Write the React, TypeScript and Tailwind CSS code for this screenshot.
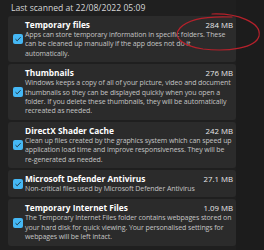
const items = [
  {
    title: "Temporary files",
    size: "284 MB",
    lines: [
      "Apps can store temporary information in specific folders. These",
      "can be cleaned up manually if the app does not do it",
      "automatically.",
    ],
  },
  {
    title: "Thumbnails",
    size: "276 MB",
    lines: [
      "Windows keeps a copy of all of your picture, video and document",
      "thumbnails so they can be displayed quickly when you open a",
      "folder. If you delete these thumbnails, they will be automatically",
      "recreated as needed.",
    ],
  },
  {
    title: "DirectX Shader Cache",
    size: "242 MB",
    lines: [
      "Clean up files created by the graphics system which can speed up",
      "application load time and improve responsiveness. They will be",
      "re-generated as needed.",
    ],
  },
  {
    title: "Microsoft Defender Antivirus",
    size: "27.1 MB",
    lines: ["Non-critical files used by Microsoft Defender Antivirus"],
  },
  {
    title: "Temporary Internet Files",
    size: "1.09 MB",
    lines: [
      "The Temporary Internet Files folder contains webpages stored on",
      "your hard disk for quick viewing. Your personalised settings for",
      "webpages will be left intact.",
    ],
  },
];

const Check = () => (
  <div className="w-[10px] h-[10px] shrink-0 rounded-[2px] bg-[#45b8f5] flex items-center justify-center">
    <svg width="8" height="8" viewBox="0 0 8 8">
      <path d="M1.5 4.2 L3.2 5.8 L6.6 2.2" fill="none" stroke="#1b2a33" strokeWidth="0.9" />
    </svg>
  </div>
);

export default function App() {
  return (
    <div
      className="relative w-[264px] h-[250px] overflow-hidden bg-[#1f1f1f] flex"
      style={{ fontFamily: '"Open Sans", "Noto Sans", sans-serif' }}
    >
      <div className="w-[236px] shrink-0 pl-2">
        <div className="pl-[3px] pt-[3px] h-[16px] text-[8.6px] leading-[10px] text-[#d6d6d6]">
          Last scanned at 22/08/2022 05:09
        </div>
        <div className="flex flex-col gap-[2px]">
          {items.map((it) => (
            <div key={it.title} className="bg-[#2b2b2b] rounded-[3px] flex items-center pl-[5px] pr-[3px] pt-[4px] pb-[4px]">
              <Check />
              <div className="flex-1 min-w-0 pl-[2px]">
                <div className="flex justify-between items-center leading-[10px]">
                  <span className="font-bold text-white text-[8.3px]">{it.title}</span>
                  <span className="text-[#e8e8e8] text-[7.8px]">{it.size}</span>
                </div>
                <div className="text-[7px] tracking-[-0.1px] leading-[9.4px] text-[#c4c4c4] whitespace-nowrap">
                  {it.lines.map((l) => (
                    <div key={l}>{l}</div>
                  ))}
                </div>
              </div>
            </div>
          ))}
        </div>
      </div>
      <div className="flex-1 bg-[#1c1c1c]" />
      <svg className="absolute left-0 top-0 pointer-events-none" width="264" height="250" viewBox="0 0 264 250">
        <path
          d="M212 14 C236 13 262 22 259 36 C256 48 228 52 203 49 C182 46 172 37 180 28 C188 19 208 16 232 17"
          fill="none"
          stroke="#b5212b"
          strokeWidth="1.2"
          strokeLinecap="round"
        />
      </svg>
    </div>
  );
}
